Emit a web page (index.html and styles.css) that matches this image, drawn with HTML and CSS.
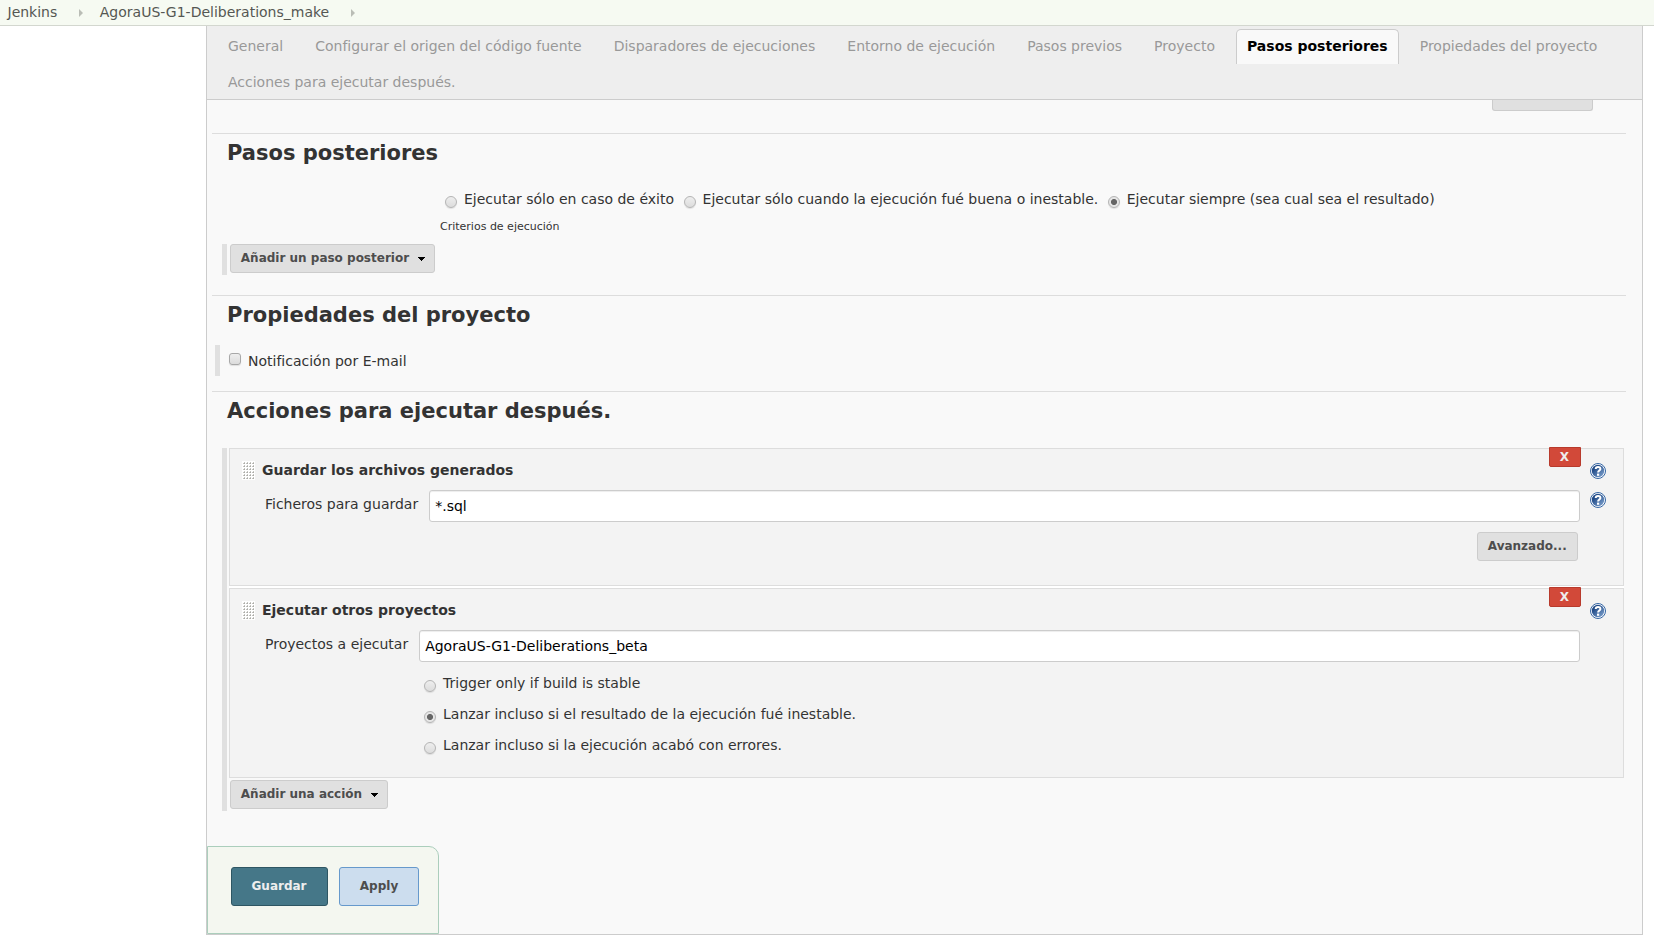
FILE: index.html
```html
<!DOCTYPE html>
<html lang="es">
<head>
<meta charset="utf-8">
<title>AgoraUS-G1-Deliberations_make Config [Jenkins]</title>
<link rel="stylesheet" href="styles.css">
</head>
<body>
<svg class="defs" width="0" height="0" aria-hidden="true">
  <defs>
    <linearGradient id="helpFill" x1="0" y1="0" x2="1" y2="1">
      <stop offset="0.25" stop-color="#204a87"/>
      <stop offset="1" stop-color="#86a9d4"/>
    </linearGradient>
    <symbol id="help" viewBox="0 0 16 16">
      <circle cx="8" cy="8" r="7.5" fill="#fff" stroke="#3465a4"/>
      <circle cx="8" cy="8" r="6.2" fill="url(#helpFill)"/>
      <path d="M5.7 6.1C5.7 3.2 10.4 3.2 10.4 5.9C10.4 7.6 8.1 7.5 8.1 9.6" fill="none" stroke="#fff" stroke-width="2"/>
      <rect x="7" y="10.6" width="2.2" height="2.2" fill="#fff"/>
    </symbol>
    <pattern id="gripDots" width="3" height="3" patternUnits="userSpaceOnUse">
      <rect width="3" height="3" fill="#fff"/>
      <path d="M2 1H3V3H1V2H2Z" fill="#c4c4c0"/>
      <rect x="2" y="2" width="1" height="1" fill="#aaaaa6"/>
    </pattern>
    <symbol id="grip" viewBox="0 0 13 19"><rect width="13" height="19" fill="url(#gripDots)"/></symbol>
    <symbol id="caret" viewBox="0 0 7 4"><path d="M0 0H7V1H6V2H5V3H4V4H3V3H2V2H1V1H0Z" fill="#000"/></symbol>
    <symbol id="chevron" viewBox="0 0 4 8"><path d="M0 0L4 4L0 8Z" fill="#babdb6"/></symbol>
  </defs>
</svg>
<nav class="breadcrumbs">
  <a>Jenkins</a>
  <svg class="chevron"><use href="#chevron"/></svg>
  <a>AgoraUS-G1-Deliberations_make</a>
  <svg class="chevron"><use href="#chevron"/></svg>
</nav>
<main class="panel">
  <div class="tabs">
    <a class="tab">General</a>
    <a class="tab">Configurar el origen del código fuente</a>
    <a class="tab">Disparadores de ejecuciones</a>
    <a class="tab">Entorno de ejecución</a>
    <a class="tab">Pasos previos</a>
    <a class="tab">Proyecto</a>
    <a class="tab active">Pasos posteriores</a>
    <a class="tab">Propiedades del proyecto</a>
    <a class="tab">Acciones para ejecutar después.</a>
  </div>
  <div class="scrolled"><span class="cut-button"></span></div>

  <section class="section steps">
    <h2>Pasos posteriores</h2>
    <div class="radio-row">
      <label><input type="radio" name="crit"><span>Ejecutar sólo en caso de éxito</span></label>
      <label><input type="radio" name="crit"><span>Ejecutar sólo cuando la ejecución fué buena o inestable.</span></label>
      <label><input type="radio" name="crit" checked><span>Ejecutar siempre (sea cual sea el resultado)</span></label>
    </div>
    <p class="criteria">Criterios de ejecución</p>
    <div class="rail">
      <button class="btn">Añadir un paso posterior<svg class="caret"><use href="#caret"/></svg></button>
    </div>
  </section>

  <section class="section props">
    <h2>Propiedades del proyecto</h2>
    <label class="rail check"><input type="checkbox"><span>Notificación por E-mail</span></label>
  </section>

  <section class="section actions">
    <h2>Acciones para ejecutar después.</h2>
    <div class="rail">
      <div class="cards">
        <div class="card first">
          <button class="delete">X</button>
          <div class="card-head"><svg class="grip"><use href="#grip"/></svg><b>Guardar los archivos generados</b><svg class="help"><use href="#help"/></svg></div>
          <div class="field"><label>Ficheros para guardar</label><input type="text" value="*.sql"><svg class="help"><use href="#help"/></svg></div>
          <div class="advanced"><button class="btn">Avanzado...</button></div>
        </div>
        <div class="card second">
          <button class="delete">X</button>
          <div class="card-head"><svg class="grip"><use href="#grip"/></svg><b>Ejecutar otros proyectos</b><svg class="help"><use href="#help"/></svg></div>
          <div class="field"><label>Proyectos a ejecutar</label><input type="text" value="AgoraUS-G1-Deliberations_beta"></div>
          <div class="radio-list">
            <label><input type="radio" name="t"><span>Trigger only if build is stable</span></label>
            <label><input type="radio" name="t" checked><span>Lanzar incluso si el resultado de la ejecución fué inestable.</span></label>
            <label><input type="radio" name="t"><span>Lanzar incluso si la ejecución acabó con errores.</span></label>
          </div>
        </div>
      </div>
      <button class="btn">Añadir una acción<svg class="caret"><use href="#caret"/></svg></button>
    </div>
  </section>

  <footer class="save-bar">
    <button class="primary">Guardar</button>
    <button class="apply">Apply</button>
  </footer>
</main>
</body>
</html>
```
FILE: styles.css
```css
* { box-sizing: border-box; }
body {
  margin: 0;
  height: 945px;
  overflow: hidden;
  background: #fff;
  color: #333;
  font: 14px/16px "DejaVu Sans", Verdana, sans-serif;
}
button, input { font-family: inherit; margin: 0; }
svg { display: block; flex: none; }
.defs { position: absolute; }

.breadcrumbs {
  display: flex;
  align-items: center;
  height: 26px;
  padding: 0 0 1px 7.5px;
  background: #f6faf2;
  border-bottom: 1px solid #d3d7cf;
  color: #555753;
}
.chevron { width: 4px; height: 8px; margin: 1px 17px 0 21.5px; }

.panel {
  display: flex;
  flex-direction: column;
  height: 909px;
  margin: 0 11px 0 206px;
  border: 1px solid #ccc;
  border-top: 0;
  background: #f9f9f9;
}
.tabs {
  display: flex;
  flex-wrap: wrap;
  align-content: flex-start;
  flex: none;
  height: 74px;
  padding: 3px 5px 0;
  background: #eee;
  border-bottom: 1px solid #ccc;
}
.tab {
  height: 35px;
  margin: 0 5px 1px;
  padding: 8px 10px 0;
  border: 1px solid transparent;
  border-bottom: 0;
  color: #999;
}
.tab.active {
  background: #f9f9f9;
  border-color: #ccc;
  border-radius: 5px 5px 0 0;
  color: #000;
  font-weight: bold;
}
.scrolled {
  display: flex;
  justify-content: flex-end;
  flex: none;
  height: 33px;
  padding-right: 49px;
}
.cut-button {
  width: 101px;
  height: 11px;
  background: #e0e0e0;
  border: 1px solid #ccc;
  border-top: 0;
  border-radius: 0 0 3px 3px;
}

.section { flex: none; margin: 0 16px 0 5px; border-top: 1px solid #ddd; }
.section h2 { margin: 6px 0 0 15px; font-size: 21px; line-height: 26px; }
.steps { height: 162px; }
.props { height: 96px; }
.actions { height: 455px; }

input[type="radio"], input[type="checkbox"] {
  appearance: none;
  flex: none;
  width: 12px;
  height: 12px;
  border: 1px solid #b4b4b4;
  border-radius: 50%;
  background: linear-gradient(#eee, #dcdcdc);
  box-shadow: 0 1px 1px rgba(0, 0, 0, .1);
}
input[type="checkbox"] { border-radius: 3px; border-color: #a8a8a8; }
input[type="radio"]:checked {
  background: radial-gradient(circle, #666 0 2.6px, #e6e6e6 3.5px);
}
.radio-row { display: flex; gap: 9.5px; margin: 25px 0 0 233px; }
.radio-row label, .radio-list label { display: flex; gap: 7px; }
.radio-row input, .radio-list input { margin-top: 5px; }
.criteria { margin: 12px 0 0 228px; font-size: 11px; line-height: 14px; }

.rail { border-left: 5px solid #e0e0e0; }
.steps .rail { height: 31px; margin: 10px 0 0 10px; padding-left: 3px; }
.check {
  display: flex;
  height: 31px;
  margin: 17px 0 0 3px;
  padding: 8px 0 0 9px;
}
.check span { margin: 0 0 0 7px; }
.actions .rail { height: 363px; margin: 24px 2px 0 10px; padding-left: 2px; }
.actions .rail > .btn { margin: 1px 0 0 1px; }

.btn {
  display: inline-flex;
  align-items: center;
  height: 29px;
  padding: 0 10px 2px 9.8px;
  background: #e0e0e0;
  border: 1px solid #ccc;
  border-radius: 3px;
  color: #4d4d4d;
  font-size: 12px;
  font-weight: bold;
}
.caret { width: 7px; height: 4px; margin: 3px -1px 0 9.2px; }

.cards { background: #fff; display: grid; gap: 2px; border-bottom: 1px solid #f9f9f9; }
.card { position: relative; background: #f3f3f3; border: 1px solid #ddd; }
.first { height: 138px; }
.second { height: 190px; }
.delete {
  position: absolute;
  top: -2px;
  right: 42px;
  width: 32px;
  height: 20px;
  padding: 0 1px 1px 0;
  background: #d24939;
  border: 1px solid #b83a2c;
  border-radius: 0 0 2px 2px;
  color: #eee;
  font-size: 12px;
  font-weight: bold;
}
.card-head { display: flex; height: 41px; padding: 12px 17px 0 12px; }
.grip { width: 13px; height: 19px; margin-right: 7px; }
.card-head b { margin-top: 1px; }
.help { width: 16px; height: 16px; }
.card-head .help { margin: 2px 0 0 auto; }
.field { display: flex; padding: 0 17px 0 35px; }
.field label { margin: 6px 11px 0 0; }
.field input {
  flex: 1;
  height: 32px;
  padding: 0 5px;
  border: 1px solid #ccc;
  border-radius: 3px;
  background: #fff;
  box-shadow: inset 0 1px 1px rgba(0, 0, 0, .075);
  color: #000;
  font-size: 14px;
}
.field .help { margin: 2px 0 0 10px; }
.second .field { padding-right: 43px; }
.advanced { display: flex; justify-content: flex-end; padding: 10px 45px 0 0; }
.advanced .btn { width: 101px; }
.radio-list { display: grid; gap: 14px; padding: 13px 0 0 194px; }

.save-bar {
  display: flex;
  gap: 11px;
  width: 232px;
  height: 88px;
  margin-top: auto;
  padding: 20px 0 0 23px;
  background: #f4f7f0;
  border: 1px solid #abcebc;
  border-radius: 0 10px 0 0;
}
.save-bar button {
  height: 39px;
  padding: 0 0 2px;
  border-radius: 3px;
  font-size: 12px;
  font-weight: bold;
}
.save-bar .primary { width: 97px; padding-right: 1px; background: #457788; border: 1px solid #2e5663; color: #eee; }
.apply { width: 80px; background: #ccddee; border: 1px solid #6699cc; color: #4d4d4d; }
```
